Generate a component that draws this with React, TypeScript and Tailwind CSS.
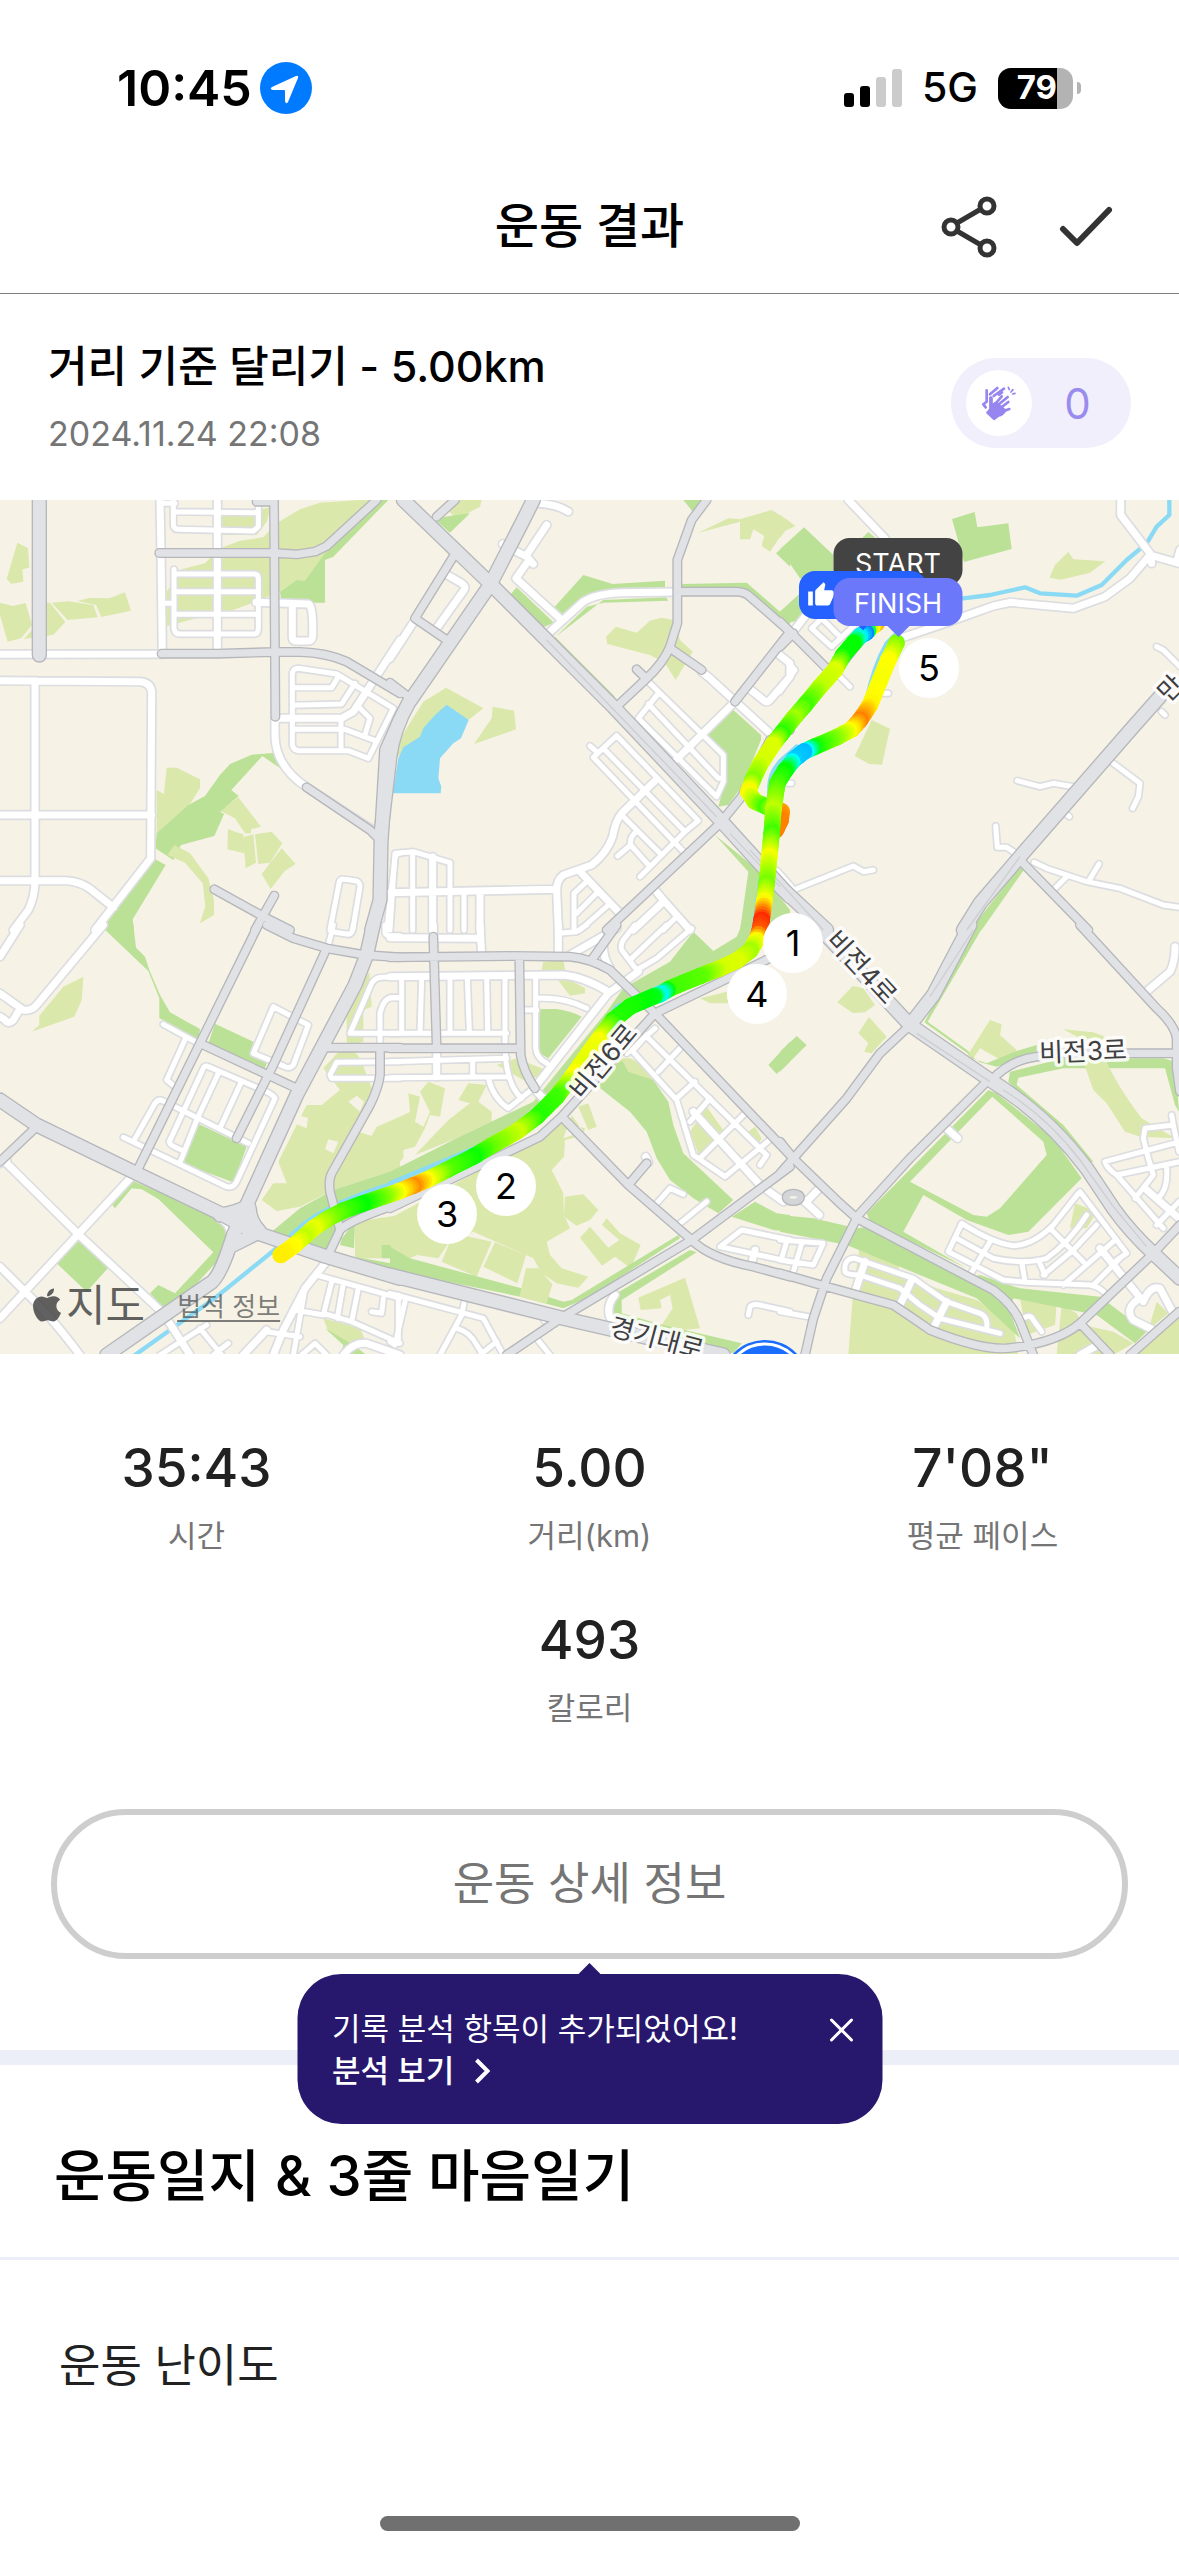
import type { ReactNode } from "react";
import { FaApple } from "react-icons/fa";
import { MdThumbUp } from "react-icons/md";

const MAP_W = 1179;
const MAP_H = 854;

interface MapTile {
  x: number;
  y: number;
  grass: string;
  park: string;
  land?: string;
  lake?: string;
  stream?: string;
  alley: string;
  street: string;
  road: string;
  avenue: string;
}

// Tile paths use a 3x grid; the whole group is scaled down when drawn.
const TILES: MapTile[] = [
  {
    x: 0,
    y: 0,
    grass:
      "M52 128L84 145 88 203 67 208 70 245 34 251 20 237ZM0 308L38 318 77 309 96 375 63 415 23 425 0 345ZM138 308H150L196 366 160 404 72 417 96 390ZM155 308L205 304 280 315 293 352 203 360ZM232 303L268 294 328 295 375 277 393 332 304 351 288 315ZM500 378V275L545 208 615 190 660 145 720 122 790 112 830 70 900 28 960 8 1080 0H1140L975 178 915 242 890 240 840 275 780 300 700 330 600 352ZM665 50L812 22 800 65 770 105H665ZM500 803H530L600 838V865L568 915 470 1000V870L492 882ZM660 932L715 892 783 980 753 988V1000H735L705 955ZM684 987L718 1000 730 1003 733 1060 682 1048ZM730 1012L760 1003 768 1088 737 1105ZM765 1003L815 995 847 1030 810 1088 775 1092ZM845 1045L887 1092 855 1112 812 1167 785 1122Z",
    park: "M840 275L890 240 915 242 975 160 1140 0H1165L1000 170 975 180V308H845ZM470 1000L565 915 615 888 660 825 690 792 755 764 820 759 845 808 787 768 694 870 716 888 660 935 672 942 643 1008 543 1035 520 1080 466 1045ZM466 1078L497 1095 398 1258 402 1290H290Z",
    alley:
      "M520 0V75Q522 88 535 88L760 93 775 80V0M520 35L775 38M490 10H525M522 208V385Q524 402 540 402H765Q775 400 775 385V235Q775 222 762 222H522M522 275H775M522 343H775M490 310H522M877 735V520Q880 505 895 505L1010 522 1180 625 1105 775 1045 752H895Q880 750 877 735M877 563H995L1015 530M877 616L1025 612 1065 550M877 688H1035L1125 722M1023 655V750M1070 615L1110 655 1095 705M990 1290L1018 1145Q1022 1135 1035 1138L1070 1143Q1080 1147 1080 1160L1058 1290M1200 1060Q1185 1060 1185 1075L1160 1290M1170 1178H1200",
    street:
      "M0 463L485 462M480 0L483 160 487 460M652 0V460M0 542L420 545Q455 548 455 580L452 1075 285 1290M105 542V1140Q105 1190 85 1230L40 1290M0 945H455M0 1142H200Q240 1145 268 1165L340 1222M825 660V710Q828 800 920 862L1125 995M830 655H1025L1060 635 1200 420M768 307L925 312Q940 315 938 410 935 423 925 423H885Q877 420 877 410V315",
    road: "M478 159H825L890 163 945 155 980 138 1130 0M822 0L826 650M770 5H822M485 461H650L826 456H900Q980 458 1040 485L1200 580M920 862L1110 990 1140 1020M643 1168L800 1255 870 1290M823 1187L765 1290",
    avenue: "M118 0V465M1200 660L1160 750 1143 1030 1140 1200 1115 1290",
  },
  {
    x: 1170,
    y: 0,
    grass:
      "M205 0H275L270 20 200 58 178 35ZM925 98L1015 55 1050 58 1145 30 1200 65 1140 155 1115 138 1123 108 1090 88 1080 118H1050V65ZM648 410L678 380 740 398 780 362 815 353 850 360 870 420 908 455 857 540 825 490 780 465 652 432ZM168 563L280 625 235 660 20 770 15 740 100 605ZM308 620L372 632 378 688 252 732 305 655Z",
    park: "M130 55L240 40 180 98ZM20 0H40L190 155 180 168ZM360 285L380 262 492 368 460 382ZM490 325L580 225 668 252 825 242V265L640 270 580 300 515 350ZM497 410L590 320 640 308 835 302 828 292 640 300ZM495 410L675 590H665L495 425ZM875 252L1070 248 1170 335 1200 310V400L1060 268 875 265ZM1158 160L1200 122V200ZM880 0H945L908 35ZM955 705L1030 630 1113 705V720L1055 860 1015 915 985 920 1005 840 1000 765ZM975 1005L1110 1115 1200 1230V1290H1050L1075 1115Z",
    lake: "M170 614L236 660 213 715 190 730 150 775 145 835 154 860 152 880H8L25 775 40 742 90 710 100 685 135 645Z",
    stream: "M1200 760Q1140 800 1138 860V950L1090 1290",
    alley:
      "M600 738L620 755M680 707L925 962 885 995 750 1130M680 707L610 772 885 1060M640 745L885 995M695 945L815 1065M740 995Q718 1010 722 1035L780 1100M722 1035L683 1068M552 1290V1180L590 1145M560 1240L620 1180M570 1290L655 1215M0 1290L15 1060 70 1055 180 1088V1290M68 1060V1290M222 1178V1290M775 545L1000 765V845L980 890 745 655 805 580M775 612L985 835H1000M820 1290L860 1250",
    street:
      "M440 10Q500 12 535 35M470 75L410 165M338 132L380 155 410 170 430 192M410 190L378 235 515 360M475 400L580 305Q620 280 700 278L860 276M172 225L215 250Q230 260 222 270L140 385M75 360L0 475M800 838L695 940Q675 965 668 1010 650 1060 605 1095L520 1125Q500 1140 500 1170L505 1290M570 1115L690 1240M0 1178L500 1168M128 1070V1290M270 1178V1290M795 1170L820 1200 900 1290M730 1290L820 1205M860 778L1035 605M935 515L960 535 1140 700M1165 462L1200 490V530L1140 600Q1130 610 1120 600L1080 568M1160 1115L1200 1160",
    road: "M0 548L55 590M190 170L75 355 170 420M140 50L195 0M950 0L905 60 862 180V370L840 440Q820 490 765 540L680 620M862 275H1040Q1065 275 1080 290L1200 395 1035 605M740 508L768 535M845 448L935 510M1200 690L1140 720 1055 890 990 970 650 1290",
    avenue:
      "M430 0L400 60 300 255 55 610Q10 690 0 770L-27 1000M40 0L300 250 670 620 1000 970 1200 1190",
  },
  {
    x: 2340,
    y: 0,
    grass:
      "M0 45L47 78 15 93 0 115ZM865 155L880 178 976 184 930 218 842 239 808 233 825 195ZM275 660L330 686 306 794 268 792 224 768Z",
    park: "M0 148L72 82 160 165V240L60 235ZM0 335L60 280H160L60 360 20 370ZM240 120L265 96 300 125ZM516 57L584 36 592 82 685 70 695 147 552 186ZM715 1105H735L605 1290H570Z",
    stream:
      "M1168 0V45L1130 80 1100 130 1040 180 965 255 890 287 780 280 735 262 630 285 550 295M345 405L320 430Q280 500 260 600M0 785L50 740",
    alley:
      "M95 385L155 440 240 360M95 385L180 300M130 360L180 410M150 500L210 560M300 580H325M0 465L45 510 0 575M1130 440L1150 450 1200 500M1145 635L1155 645M1000 790L1080 850 1075 890 1058 925M712 842L780 860 820 850 890 862M862 945L868 950M647 978L652 1042H680L715 1065M762 1087L800 1105 920 1145 1020 1165 1150 1215 1200 1222M957 1092L925 1145M860 1130L820 1170M0 1130L40 1170 220 1098 250 1115 280 1110M20 850H35",
    street:
      "M205 0L315 115M360 415L480 375 640 318 690 307 880 325 975 290 1050 235 1110 165 1197 190M1022 0V45L1110 160 1115 190M1200 150L1190 185M75 350L40 395",
    road: "M0 365L140 505M40 400L0 440M725 1085L925 1290M315 330L0 720",
    avenue: "M1140 590L1060 680 720 1070 600 1210 550 1290M0 1160L140 1290",
  },
  {
    x: 0,
    y: 1275,
    grass:
      "M250 155L245 225 223 275 95 320 118 300V272L190 185ZM1108 140L1115 245 1090 255V350L1030 365 970 430 1020 495 965 540 920 540 835 710 860 775 820 775 785 825 830 858 900 845 1000 795 1200 730V575L1130 605 1115 633 1075 620 1120 500 1080 400 1040 350V250ZM1065 890L1200 870V1000H1065ZM970 1180L1080 1210 1095 1245 1060 1260 1030 1250 985 1220Z",
    park: "M310 10L400 0 408 68 435 95 448 135 480 210 510 262 600 312 595 345 490 285 478 280V220L445 138ZM645 296L760 350 752 385 800 415 795 430 625 355ZM597 598L740 665 700 772 545 715ZM400 768L660 880 685 935 660 1000 540 1130 490 1148 450 1105 475 1080 525 1105 640 982 475 822 425 793 395 790 345 850 335 838ZM235 948L325 1028 260 1100 170 1015ZM815 920L900 850 1000 795 1200 730V830L1080 870 1010 960 980 975ZM1035 900L1065 890 1062 970 1020 960ZM1145 960H1172V1000H1145ZM1065 995L1200 1020V1040ZM975 1210L1030 1260 1020 1290H1100L1060 1260Z",
    land: "M1045 530L1070 512 1092 530 1080 560ZM890 570L924 578 920 610 890 598ZM985 643L1015 650 1000 685 975 672Z",
    stream: "M1200 770Q950 840 860 945L650 1115 405 1290",
    alley:
      "M490 298L585 350M557 340L500 465 525 485M820 245L925 300 880 420Q870 432 855 425L760 385ZM400 650L465 535Q475 520 490 528L745 655M370 637L450 675 680 785Q700 790 710 770L825 520Q820 510 800 500L625 425Q615 420 610 430L508 650Q505 660 545 675M655 445L590 585 540 712M722 475L662 605M985 60L1000 0M995 20L1045 28Q1058 28 1060 0M1155 0V20Q1155 32 1175 32H1200M1200 325H1050L1115 175Q1125 158 1145 157L1200 155M1140 370V265Q1150 220 1175 218H1200M1200 410L1010 412 990 450 995 460H1200M950 1050L1200 1120M995 1070L970 1170 915 1160 880 1155M1030 1075L1012 1180M970 1165L1055 1190 1200 1255M1075 1090L1055 1190M915 1090L880 1290M1150 1120L1145 1165 1115 1160M800 1220L900 1235M905 1290L945 1255 980 1290M620 1200L480 1290M600 1210L665 1290M685 1255L640 1290M1195 1110V1255",
    street:
      "M60 0L0 95M310 0L110 240Q95 258 70 255L0 205M55 260L40 285Q25 300 15 285L0 275M20 715L232 925 490 1165 570 1290M395 755L0 1180M0 1025L70 1095Q150 1170 240 1290M975 1015L915 1090 850 1215 820 1290M730 1290L800 1215M1030 1290Q1060 1250 1100 1255L1200 1290M660 880Q700 900 690 950M0 715L20 705",
    road: "M775 0L410 740M800 0L880 40 980 70 1095 90 1200 97M980 70L820 420 710 640M600 355L890 490M985 368H1200M1140 370V450Q1135 490 1110 540L995 745Q985 765 990 800L1020 915 980 1000M1020 915Q1050 885 1200 835M110 605L0 710",
    avenue:
      "M0 525L110 600 410 745 660 865 760 920 980 995 1200 1060M1120 0L1100 90 1065 180 890 510 740 840 700 930Q660 1060 630 1075L320 1290M745 840Q720 860 660 870M748 850Q750 890 780 920L700 960",
  },
  {
    x: 1170,
    y: 1275,
    grass:
      "M460 110L520 105 530 160 585 190V205L540 212 500 160 455 135ZM0 590L60 560 55 505 90 515 75 590 100 605 120 560 90 500 115 470 165 490 150 575 120 570 105 610 75 665 40 675V700L0 740ZM205 525L235 475 290 480 265 530 305 560V590L200 640 75 690 175 585 240 535ZM320 420L380 400 480 440 430 460 400 465ZM680 400H720L760 420 800 470 740 455 700 430ZM0 880L300 720 440 650 510 590 585 610 580 630 525 645 522 695 485 735 520 805 522 870 540 910 470 950 480 990 515 1030 595 1055 565 1088 500 1075 455 1045 430 1000 250 920 175 955 145 1000 80 990 60 1000 0 1003ZM525 815L580 808 625 855 600 885 560 902 522 875ZM190 925L305 950 260 1055 155 1010ZM315 952L408 990 382 1075 280 1025ZM600 905L655 968 688 945 636 900 650 880 690 925 752 960 722 1030 675 995 636 1022 570 938ZM885 1058L930 1210 850 1218 815 1200 848 1150 840 1110 810 1125 815 1150 752 1155 745 1118ZM595 535L620 605 595 615 565 545ZM545 570L580 620 520 640ZM930 220L1010 200 1015 235 960 235ZM900 620L950 545 1010 630 930 700ZM1060 630L1095 605 1115 640 1100 670Z",
    park: "M0 740L200 640 430 530 650 260 700 190 840 110 910 20 970 78 1040 35 1055 0H1120L1080 80 850 190 720 240 600 400 480 560 200 700 0 790ZM450 252H500Q550 260 575 275L475 400 440 380ZM625 485L690 395 715 440 790 465 835 530 850 600 880 685 1030 825 985 865 910 820 840 765 800 700 770 620 720 560ZM1025 875L1095 830 1160 865 1200 870V920L1150 915ZM1135 420L1200 350V410L1160 447ZM0 965L60 1000 395 1090 520 1130 545 1125 865 930 870 940 600 1115 520 1150 390 1115 0 1035ZM680 1105L900 975 920 982 695 1125V1165L820 1200 1055 1255 1030 1285 670 1175 665 1130Z",
    stream: "M460 545L530 440 650 290 680 245 790 195 1060 85M0 775L300 650",
    alley:
      "M505 25L560 20 590 0M905 10L800 100 740 135 695 75Q690 60 700 45L735 0M725 100L830 0M590 250Q520 215 440 220M405 255H440M437 155V370Q440 400 470 415M0 325H350M345 325V375Q350 480 395 520M35 160V325M95 160L90 325M180 160V320M232 160L238 320M290 160L293 320M345 160V325M0 218H30M0 410L350 400M0 458L350 455M248 405V455M295 460Q310 520 355 550L430 490M870 895L950 830M800 835L840 790 880 808M990 965L1055 915 1200 945M990 965L1200 1010M1190 950L1175 1000M1075 1170L1080 1145Q1090 1135 1110 1140L1200 1160M0 1105L280 1180 340 1290M45 1130L15 1260 0 1250M222 1135L215 1170 150 1290M200 1210Q240 1220 260 1260L280 1290M320 1250L270 1290M440 1240L480 1290M710 385L795 310M720 370L860 525 910 690 1005 755 1145 640M775 340L1130 690 1110 720M870 370L805 440M915 470L860 520M960 520L900 590M1060 570L930 700M770 330L735 370",
    street:
      "M0 38L265 40M130 0V35M270 0L275 90M505 0V90M540 90L680 10M640 60Q640 100 660 130M0 155L520 150Q580 155 655 200M440 480L655 205 745 140M430 490L465 525M140 375V455M910 560L1110 780 1180 830M767 695L775 712M675 1110Q640 1150 670 1200M465 1185L490 1195M1095 975L1085 1015",
    road: "M0 97L370 93 540 95Q600 100 660 135L795 265 1200 690M680 0L605 105M130 35L140 370M0 370H390M388 95L392 390Q400 440 435 490M1180 80L795 265 515 575M0 850L450 635 515 575 715 780 905 945Q960 1000 1090 1025L1200 1055M715 780L770 715M1200 725L905 945 520 1175 350 1290",
    avenue: "M0 1050L520 1180 1000 1290",
  },
  {
    x: 2340,
    y: 1275,
    grass:
      "M172 232L218 183 250 190 285 240 255 262 218 264ZM267 276L320 335 275 385 252 380 265 355 235 325ZM560 395L630 285 665 298 660 330 710 375 680 415 600 370 580 400ZM850 313L940 322 1000 345 900 340ZM240 960L360 1005 355 1040 470 1090 590 1125 640 1160 700 1200 715 1290H205L220 1090ZM720 1120L830 1135 825 1200 740 1230ZM845 1140L890 1165 910 1200 1000 1220 1060 1255 1000 1290H830ZM885 835L950 860 920 910 870 910ZM1130 1130L1165 1165 1105 1215ZM1110 1250L1197 1170V1290H1060Z",
    park: "M590 0H612L443 290 565 378 575 400 620 415 710 378 770 360V385L650 425 600 412 433 292ZM690 440L850 400H1150L1185 410 1197 560 1185 540 1155 430H850L715 458 710 480 850 600 940 710 930 712 685 470ZM625 495L650 505 820 640 905 760 745 920 685 930 560 885 430 810 370 920 560 1030 270 890 260 865ZM637 515L390 770 580 870 620 875 660 850 800 690 790 650ZM0 870L100 880 230 910 270 905 560 1060 600 1050 720 1090 960 1115 1100 1220 1065 1255 950 1170 700 1120 690 1160 720 1240 590 1120 200 960 0 920ZM0 380L50 333 80 360 0 440Z",
    alley:
      "M1175 570L1180 600 1095 610 1090 640 1105 700 1120 750 1065 820M1180 600L1197 680M1200 650L975 710Q980 730 1010 750L1150 910M1010 750L1200 710M1160 730Q1165 790 1135 820M1197 830L1130 900M900 800L1040 985 1010 1005M895 805L820 900Q760 960 700 962 640 955 545 895L505 980 670 1065 740 1072 930 1080Q960 1085 980 1110M530 940L640 1000Q730 1020 800 1000 870 950 920 870M630 950L570 1050M810 910L910 1010M950 900L880 975 790 1050M1000 950L850 1080M725 1010L735 1070M775 1005L795 1050M1020 1000L940 1080M0 945L130 955 100 1020 0 1005M65 955L40 1040M0 1160L85 1175M730 1180Q750 1165 760 1185L785 1220M225 1000Q190 1000 195 1040 200 1050 240 1050L360 1090 420 1140 480 1180 660 1225M225 1000L400 1060Q470 1110 500 1130L600 1165Q625 1175 620 1210",
    street:
      "M500 610L533 640M1105 195L1170 140Q1185 110 1185 65M1095 790L1197 880M960 970L1090 1130Q1110 1080 1140 1090L1180 1165M1080 1120Q1030 1150 1060 1185L1120 1215M255 1010L225 1100M395 1065L360 1140M500 1130L460 1210M80 830L118 790M75 830L118 870M0 822L70 825M945 1265L900 1290",
    road: "M0 650L40 700 180 835 230 880 640 1095Q700 1140 720 1190L760 1290M380 310L300 385 200 520 40 700 0 745M620 470L390 700 235 870 140 1060 100 1180 75 1290M0 1045L140 1085 340 1140Q400 1180 450 1215 600 1275 680 1270 830 1255 900 1195L1120 985 1200 900M900 1195L990 1290M1050 1290L1197 1160M635 465Q690 405 770 395L840 385H1190M900 0L1130 250Q1185 300 1190 340V430L1200 500",
    avenue:
      "M110 0L390 300 630 465Q800 570 920 730L1000 850Q1050 920 1120 985L1200 1060M570 0L460 210 390 300",
  },
];

// Grass drawn over the park areas
const MEADOWS =
  "M523 1035L570 1060 625 1135 642 1200V1245L600 1270 616 1218 608 1150 555 1088 502 1065ZM3250 1685H3320Q3350 1755 3425 1855L3525 1915 3420 1910 3375 1895 3320 1810 3280 1770ZM1578 2305H1615L1657 2353 1640 2410 1558 2390Z";

// [x, y, hue]; hue is the pace colour
type TrackPoint = [number, number, number];

const OUTBOUND: TrackPoint[] = [
  [2630, 370, 40], [2610, 385, 70], [2598, 398, 208], [2580, 408, 185], [2560, 430, 120],
  [2530, 465, 118], [2505, 510, 68], [2460, 560, 75], [2415, 615, 105], [2380, 655, 82],
  [2345, 700, 110], [2318, 735, 68], [2282, 790, 70], [2258, 840, 90], [2245, 875, 58],
  [2265, 905, 78], [2300, 920, 105], [2335, 930, 70], [2345, 935, 36], [2342, 960, 30], [2328, 990, 30],
];

const INBOUND: TrackPoint[] = [
  [2690, 428, 92], [2665, 480, 60], [2638, 545, 62], [2610, 615, 58], [2580, 660, 30],
  [2555, 688, 56], [2510, 712, 85], [2445, 740, 115], [2412, 755, 196], [2382, 778, 192],
  [2355, 812, 120], [2332, 850, 105], [2320, 930, 75], [2315, 1000, 105], [2308, 1070, 62],
  [2300, 1150, 92], [2292, 1210, 58], [2285, 1260, 10], [2278, 1295, 20], [2270, 1320, 58],
  [2250, 1352, 82], [2210, 1382, 68], [2160, 1405, 70], [2100, 1428, 98], [2010, 1465, 105],
  [1980, 1483, 182], [1960, 1490, 125], [1890, 1520, 115], [1840, 1560, 112], [1795, 1620, 62],
  [1740, 1695, 66], [1715, 1730, 60], [1670, 1790, 105], [1610, 1850, 112], [1550, 1895, 72],
  [1470, 1940, 95], [1420, 1970, 118], [1340, 2010, 100], [1280, 2040, 60], [1240, 2057, 33],
  [1195, 2075, 60], [1150, 2090, 90], [1085, 2112, 120], [1030, 2132, 105], [985, 2155, 88],
  [940, 2185, 65], [910, 2212, 75], [880, 2238, 60], [842, 2265, 56],
];

const ROAD_NAMES = [
  { text: "비전4로", x: 862, y: 967, angle: 47 },
  { text: "비전6로", x: 603, y: 1061, angle: -50 },
  { text: "비전3로", x: 1083, y: 1051, angle: -2 },
  { text: "경기대로", x: 657, y: 1338, angle: 15 },
  { text: "만", x: 1170, y: 688, angle: -45 },
];

const KM_MARKS = [
  { km: 5, x: 929, y: 168 },
  { km: 1, x: 793, y: 443 },
  { km: 4, x: 757, y: 494 },
  { km: 2, x: 506, y: 686 },
  { km: 3, x: 447, y: 714 },
];

const STATS = [
  { value: "35:43", label: "시간" },
  { value: "5.00", label: "거리(km)" },
  { value: "7'08\"", label: "평균 페이스" },
];

function Track({ points }: { points: TrackPoint[] }) {
  const dots: ReactNode[] = [];
  for (let i = 1; i < points.length; i++) {
    const [ax, ay, ah] = points[i - 1];
    const [bx, by, bh] = points[i];
    const steps = Math.max(2, Math.round(Math.hypot(bx - ax, by - ay) / 8));
    for (let s = 0; s <= steps; s++) {
      const t = s / steps;
      dots.push(
        <circle
          key={`${i}-${s}`}
          cx={ax + (bx - ax) * t}
          cy={ay + (by - ay) * t}
          r="25"
          fill={`hsl(${Math.round(ah + (bh - ah) * t)} 100% 50%)`}
        />
      );
    }
  }
  return <g>{dots}</g>;
}

function Layer({ name, width, color }: { name: keyof MapTile; width?: number; color: string }) {
  return (
    <>
      {TILES.map((tile) => (
        <path
          key={`${tile.x}-${tile.y}`}
          transform={`translate(${tile.x} ${tile.y})`}
          d={String(tile[name] ?? "")}
          fill={width ? "none" : color}
          fillRule="evenodd"
          stroke={width ? color : "none"}
          strokeWidth={width}
          strokeLinecap="round"
          strokeLinejoin="round"
        />
      ))}
    </>
  );
}

function MapCanvas() {
  return (
    <svg viewBox={`0 0 ${MAP_W} ${MAP_H}`} className="block h-full w-full" aria-hidden="true">
      <rect width={MAP_W} height={MAP_H} fill="#f6f2e6" />
      <g transform={`scale(${1 / 3})`}>
        <Layer name="grass" color="#dae8ab" />
        <Layer name="park" color="#bbe197" />
        <Layer name="land" color="#f6f2e6" />
        <path d={MEADOWS} fill="#dae8ab" />
        <Layer name="lake" color="#8adaf5" />
        <Layer name="stream" width={13} color="#8adaf5" />
        <Layer name="alley" width={25} color="#dcdde0" />
        <Layer name="street" width={31} color="#dcdde0" />
        <Layer name="alley" width={15} color="#ffffff" />
        <Layer name="street" width={21} color="#ffffff" />
        <Layer name="road" width={30} color="#b6b7bb" />
        <Layer name="avenue" width={46} color="#b6b7bb" />
        <Layer name="road" width={22} color="#e1e2e6" />
        <Layer name="avenue" width={38} color="#e1e2e6" />
        <path
          d="M1640 420L2150 950M2190 1000L2340 1160M3060 1070L2900 1290M2920 1290L2790 1490M2750 1600L2970 1745M3010 1770Q3140 1850 3240 1980L3340 2120 3440 2240M2250 1050L2470 1290"
          fill="none"
          stroke="#cdced2"
          strokeWidth="4"
        />
        <ellipse cx="2380" cy="2092" rx="22" ry="13" fill="#e1e2e6" stroke="#b6b7bb" strokeWidth="26" />
        <ellipse cx="2380" cy="2092" rx="22" ry="13" fill="#f6f2e6" stroke="#d4d5d9" strokeWidth="18" />
        <Track points={OUTBOUND} />
        <Track points={INBOUND} />
      </g>
      {ROAD_NAMES.map((road) => (
        <text
          key={road.text}
          transform={`translate(${road.x} ${road.y - 500}) rotate(${road.angle})`}
          textAnchor="middle"
          dominantBaseline="central"
          fill="#3f3f42"
          stroke="#ffffff"
          strokeOpacity="0.85"
          strokeWidth="7"
          strokeLinejoin="round"
          paintOrder="stroke"
          className="text-[26px]"
        >
          {road.text}
        </text>
      ))}
      <circle cx="765" cy="884" r="44" fill="#1a6dff" />
      <circle cx="765" cy="884" r="40" fill="none" stroke="#ffffff" strokeWidth="3" />
    </svg>
  );
}

function Pin({ x, y, children }: { x: number; y: number; children: ReactNode }) {
  return (
    <div
      className="absolute -translate-x-1/2 -translate-y-1/2"
      style={{ left: `${(x / MAP_W) * 100}%`, top: `${(y / MAP_H) * 100}%` }}
    >
      {children}
    </div>
  );
}

function RouteMap() {
  return (
    <section aria-label="달리기 경로" className="relative aspect-[1179/854] w-full overflow-hidden">
      <MapCanvas />
      {KM_MARKS.map((mark) => (
        <Pin key={mark.km} x={mark.x} y={mark.y}>
          <div className="flex size-[60px] items-center justify-center rounded-full bg-white text-4xl text-black">
            {mark.km}
          </div>
        </Pin>
      ))}
      <Pin x={898} y={62}>
        <div className="flex h-12 w-[129px] items-center justify-center rounded-2xl bg-[#434343] pt-1 text-[27px] text-white">
          START
        </div>
      </Pin>
      <Pin x={863} y={95}>
        <div className="relative flex h-12 w-32 items-center rounded-2xl bg-[#2461ff] pl-2 text-white">
          <MdThumbUp className="size-7" />
          <div className="absolute top-full left-1/2 -mt-2 size-4 -translate-x-1/2 rotate-45 bg-[#2461ff]" />
        </div>
      </Pin>
      <Pin x={898} y={102}>
        <div className="relative flex h-12 w-[129px] items-center justify-center rounded-2xl bg-[#6b78f9] pt-1 text-[27px] text-white">
          FINISH
          <svg viewBox="0 0 24 12" className="absolute top-full left-1/2 -mt-px h-3 w-6 -translate-x-1/2">
            <path d="M0 0H24L12 12Z" fill="#6b78f9" />
          </svg>
        </div>
      </Pin>
      <div className="absolute bottom-6 left-7 flex items-center text-[#454545]/85">
        <FaApple className="size-[38px]" />
        <span className="text-[43px] leading-[50px]">지도</span>
        <a href="#legal" className="ml-8 pt-1 text-[26px] leading-9 underline underline-offset-4 opacity-80">
          법적 정보
        </a>
      </div>
    </section>
  );
}

function StatusBar() {
  return (
    <div className="flex h-[176px] items-center justify-between pr-[98px] pl-[117px] text-black">
      <div className="flex items-center gap-2">
        <span className="text-[50px] font-semibold">10:45</span>
        <svg viewBox="0 0 52 52" className="size-[52px]" aria-hidden="true">
          <circle cx="26" cy="26" r="26" fill="#007aff" />
          <path
            d="M12 25L36 14Q39 13 38 16L28 40Q26 43 25 39V29Q25 28 24 28H13Q9 27 12 25Z"
            fill="#fff"
          />
        </svg>
      </div>
      <div className="flex items-center">
        <svg viewBox="0 0 58 38" className="h-[38px] w-[58px]" aria-hidden="true">
          <rect x="0" y="24" width="10" height="14" rx="3" />
          <rect x="16" y="17" width="10" height="21" rx="3" />
          <rect x="32" y="8" width="10" height="30" rx="3" fill="#cccccc" />
          <rect x="48" y="0" width="10" height="38" rx="3" fill="#cccccc" />
        </svg>
        <span className="ml-5 text-[41px] font-medium">5G</span>
        <div className="ml-5 flex items-center gap-1">
          <div className="flex h-[41px] w-[75px] overflow-hidden rounded-[13px] bg-[#b3b3b3]">
            <div className="flex w-[59px] items-center justify-end bg-black text-[33px] font-bold text-white">
              79
            </div>
          </div>
          <div className="h-3 w-1 rounded-r-full bg-[#b3b3b3]" />
        </div>
      </div>
    </div>
  );
}

function ClapIcon() {
  return (
    <svg
      viewBox="395 192 108 108"
      className="size-9"
      fill="none"
      stroke="#9785f0"
      strokeLinecap="round"
      strokeLinejoin="round"
      aria-hidden="true"
    >
      <path
        d="M414 275L424 263V230V255L440 245 468 268Q460 282 448 284L434 294Z"
        fill="#9785f0"
        strokeWidth="7"
      />
      <path d="M425 231V265" strokeWidth="11" />
      <path d="M435 252L457 226M443 254L475 228M452 262L477 243M458 272L480 264" strokeWidth="8" />
      <path d="M412 208V242L402 250 409 259M422 220L444 201M433 225L464 203M449 221L458 214" strokeWidth="8" />
      <path d="M477 199L480 206M485 213L491 206M490 219L497 217" strokeWidth="5" />
    </svg>
  );
}

function Stat({ value, label }: { value: string; label: string }) {
  return (
    <div className="flex flex-col items-center">
      <dd className="text-[53px] leading-[64px] font-medium text-[#212121]">{value}</dd>
      <dt className="order-last mt-3 text-[31px] leading-[48px] text-[#757575]">{label}</dt>
    </div>
  );
}

export default function App() {
  return (
    <div className="min-h-screen bg-white font-['Inter','Noto_Sans_CJK_KR',sans-serif] text-black">
      <StatusBar />

      <header className="grid h-[118px] grid-cols-[1fr_auto_1fr] items-start border-b border-[#808080] px-[66px] pt-4">
        <h1 className="col-start-2 text-5xl leading-[68px] font-medium">운동 결과</h1>
        <div className="flex h-[70px] items-center justify-end gap-[62px]">
          <button type="button" aria-label="공유">
            <svg viewBox="0 0 56 62" className="h-[62px] w-14" fill="none" stroke="#333" strokeWidth="5">
              <circle cx="46" cy="10" r="7" />
              <circle cx="10" cy="31" r="7" />
              <circle cx="46" cy="52" r="7" />
              <path d="M16 27L40 13M16 35L40 49" />
            </svg>
          </button>
          <button type="button" aria-label="완료">
            <svg
              viewBox="0 0 54 42"
              className="h-[42px] w-[54px]"
              fill="none"
              stroke="#333"
              strokeWidth="6"
              strokeLinecap="round"
              strokeLinejoin="round"
            >
              <path d="M4 23L18 37 50 4" />
            </svg>
          </button>
        </div>
      </header>

      <section className="flex h-[206px] items-start justify-between px-12">
        <div className="pt-10">
          <h2 className="text-[43px] leading-[64px] font-medium">거리 기준 달리기 - 5.00km</h2>
          <p className="mt-4 text-[34px] leading-10 text-[#757575]">2024.11.24 22:08</p>
        </div>
        <button
          type="button"
          className="mt-16 flex h-[90px] w-[180px] items-center rounded-full bg-[#f1effc] pr-2 pl-[15px]"
        >
          <span className="flex size-[66px] items-center justify-center rounded-full bg-white">
            <ClapIcon />
          </span>
          <span className="flex-1 text-center text-[42px] text-[#9a8cee]">0</span>
        </button>
      </section>

      <RouteMap />

      <dl className="grid grid-cols-3 gap-y-12 pt-[82px]">
        {STATS.map((stat) => (
          <Stat key={stat.label} value={stat.value} label={stat.label} />
        ))}
        <div className="col-start-2">
          <Stat value="493" label="칼로리" />
        </div>
      </dl>

      <div className="relative px-[51px] pt-[77px] pb-[91px]">
        <button
          type="button"
          className="h-[150px] w-full rounded-full border-[6px] border-[#cecece] text-[45px] text-[#757575]"
        >
          운동 상세 정보
        </button>
        <div
          role="status"
          className="absolute top-[242px] left-1/2 z-10 flex h-[150px] w-[585px] -translate-x-1/2 items-start justify-between rounded-[44px] bg-[#27186e] pt-[34px] pr-[29px] pl-[35px] text-[31px] leading-[42px] text-white"
        >
          <svg viewBox="0 0 22 11" className="absolute bottom-full left-1/2 h-[11px] w-[22px] -translate-x-1/2">
            <path d="M0 11L11 0 22 11Z" fill="#27186e" />
          </svg>
          <div>
            <p>기록 분석 항목이 추가되었어요!</p>
            <a href="#analysis" className="flex items-center gap-5 font-medium">
              분석 보기
              <svg viewBox="0 0 16 26" className="h-[26px] w-4" fill="none" stroke="#fff" strokeWidth="4">
                <path d="M2 2L13 13 2 24" />
              </svg>
            </a>
          </div>
          <button type="button" aria-label="닫기" className="flex h-[44px] w-6 items-center justify-center">
            <svg viewBox="0 0 24 24" className="size-6" fill="none" stroke="#fff" strokeWidth="3" strokeLinecap="round">
              <path d="M2 2L22 22M22 2L2 22" />
            </svg>
          </button>
        </div>
      </div>

      <section className="border-t-[15px] border-[#eceff8]">
        <h2 className="border-b-[3px] border-[#eceff8] px-[54px] pt-[71px] pb-[41px] text-[56px] leading-[80px] font-medium">
          운동일지 &amp; 3줄 마음일기
        </h2>
        <h3 className="px-[59px] pt-[74px] text-[45px] leading-[64px] text-[#212121]">운동 난이도</h3>
      </section>

      <div className="flex justify-center pt-[118px] pb-6">
        <div className="h-[15px] w-[420px] rounded-full bg-[#707070]" />
      </div>
    </div>
  );
}
